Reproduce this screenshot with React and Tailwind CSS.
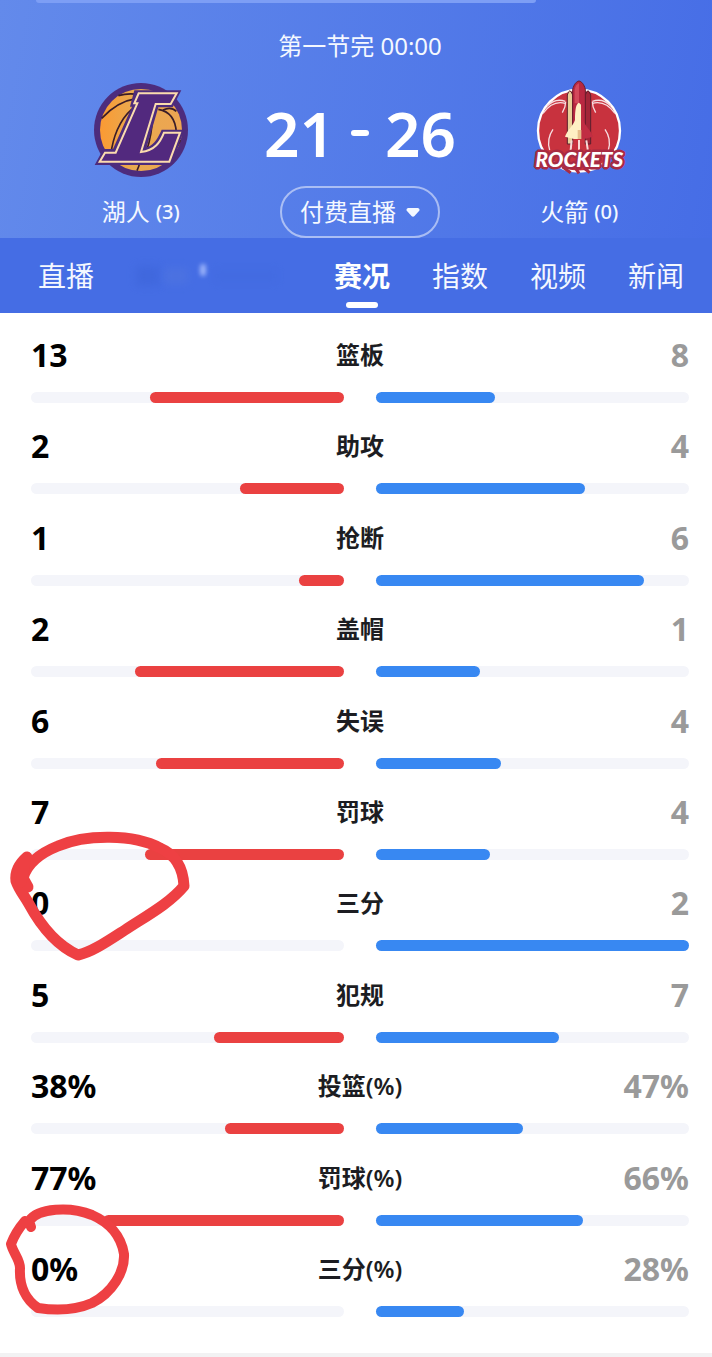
const tabs = ['赛况', '指数', '视频', '新闻'];

const stats = [
  { label: '篮板', home: 13, away: 8 },
  { label: '助攻', home: 2, away: 4 },
  { label: '抢断', home: 1, away: 6 },
  { label: '盖帽', home: 2, away: 1 },
  { label: '失误', home: 6, away: 4 },
  { label: '罚球', home: 7, away: 4 },
  { label: '三分', home: 0, away: 2, mark: 'wide' },
  { label: '犯规', home: 5, away: 7 },
  { label: '投篮(%)', home: 38, away: 47, percent: true },
  { label: '罚球(%)', home: 77, away: 66, percent: true },
  { label: '三分(%)', home: 0, away: 28, percent: true, mark: 'round' },
];

const LakersLogo = () => (
  <svg viewBox="30 30 300 300" className="w-[100px] h-[100px]" aria-hidden="true">
    <defs>
      <linearGradient id="ball" x1="0" x2="1">
        <stop offset="0" stopColor="#fb9a33" />
        <stop offset="0.4" stopColor="#e9a94f" />
        <stop offset="1" stopColor="#eda552" />
      </linearGradient>
    </defs>
    <circle cx="180" cy="180" r="141" fill="#4d2c7d" />
    <circle cx="180" cy="180" r="123" fill="url(#ball)" />
    <g fill="none" stroke="#3a1c28" strokeWidth="5">
      <path d="M62 145C90 115 125 92 165 86" />
      <path d="M112 77C135 70 155 70 175 74" />
      <path d="M90 252C95 205 115 150 152 118" />
      <path d="M217 120C214 175 207 215 196 244" />
      <path d="M232 118C268 124 284 150 286 188" />
      <path d="M246 120C262 112 276 114 286 124" />
      <path d="M168 302C174 290 176 280 177 272" />
      <path d="M268 262C280 245 292 228 298 210" />
    </g>
    <path
      d="M160 61H301L275 112H232L197 232C222 224 232 200 242 179H309L273 285H41L67 237H96L153 110H147Z"
      fill="#4d2c7d"
    />
    <path
      d="M173 70H287L269 102H224L180 246C222 242 238 216 249 188H297L265 275H56L72 248H104L169 100H160Z"
      fill="#52297e"
      stroke="#fbdcae"
      strokeWidth="6"
    />
  </svg>
);

const RocketsLogo = () => (
  <svg viewBox="30 30 300 300" className="w-[100px] h-[100px]" aria-hidden="true">
    <circle cx="180" cy="182" r="123" fill="#c8323e" stroke="#fff" strokeWidth="7" />
    <g fill="none" stroke="#f6dde0" strokeWidth="4">
      <path d="M139 100C112 92 88 108 72 130M139 94C112 84 96 96 84 108" />
      <path d="M220 100C248 92 272 108 288 130M220 94C248 84 264 96 276 108" />
      <path d="M102 178C88 198 86 220 92 240M258 178C272 198 274 220 268 240" />
      <path d="M140 95C140 108 136 118 130 128M220 95C220 108 224 118 230 128" />
    </g>
    <path d="M145 222V75Q152 50 161 75V222Z" fill="#e9cf98" stroke="#5b1f2d" strokeWidth="3" />
    <path d="M199 222V75Q207 50 215 75V222Z" fill="#a32538" stroke="#5b1f2d" strokeWidth="3" />
    <path d="M161 202V58C165 42 173 34 180 33C187 34 195 42 199 58V202Z" fill="#b92841" stroke="#6b1c2c" strokeWidth="3" />
    <path d="M167 60C169 48 174 42 180 40V100H167Z" fill="#d4495b" />
    <path d="M180 98C189 101 192 118 192 150C198 168 216 182 222 200L195 207H180Z" fill="#c02d43" />
    <path d="M180 98C171 101 168 118 168 150C162 168 144 182 138 200L165 207H186V104Z" fill="#fff0c4" />
    <path d="M176 180H187V207H176Z" fill="#e6bf8c" />
    <path d="M158 211L154 250M180 210V250M202 211L208 250" stroke="#f9d9d6" strokeWidth="6" />
    <path d="M130 290L155 308M170 295L180 310M195 294L212 308" stroke="#a92b43" strokeWidth="9" />
    <text
      x="181"
      y="292"
      textAnchor="middle"
      fill="#fff"
      stroke="#a92b43"
      strokeWidth="15"
      strokeLinejoin="bevel"
      paintOrder="stroke"
      className="font-['Lato'] font-black italic text-[62px]"
    >
      ROCKETS
    </text>
  </svg>
);

const Team = ({ logo, name, wins }) => (
  <div className="flex flex-col items-center pb-2.5">
    {logo}
    <div className="mt-4 flex items-center gap-1.5 text-2xl leading-8">
      <span>{name}</span>
      <span className="text-xl leading-8 font-medium">({wins})</span>
    </div>
  </div>
);

const Header = () => (
  <header className="relative bg-linear-100 from-[#638aeb] to-[#466de6] pl-[31px] pr-[23px] pt-[30px] text-[#f4f8ff]">
    <div className="absolute top-0 left-9 right-44 h-[3px] rounded-b-full bg-[#7d9ef5]" />
    <p className="text-center text-2xl leading-8">第一节完 00:00</p>
    <div className="mt-[18px] grid grid-cols-3">
      <Team logo={<LakersLogo />} name="湖人" wins={3} />
      <div className="flex flex-col items-center justify-between pt-4">
        <div className="flex items-center gap-4 text-[62px] leading-[74px] font-semibold text-white">
          <span>21</span>
          <span className="h-1.5 w-[18px] rounded-full bg-white" />
          <span>26</span>
        </div>
        <button className="flex h-[52px] items-center gap-2.5 rounded-full border-2 border-white/50 px-[18px] text-2xl">
          付费直播
          <svg viewBox="0 0 14 9" className="h-[9px] w-3.5" fill="currentColor" aria-hidden="true">
            <path d="M2 0H12Q14.500 1 13 3L8.500 8Q7 9.500 5.500 8L1 3Q-.5 1 2 0Z" />
          </svg>
        </button>
      </div>
      <Team logo={<RocketsLogo />} name="火箭" wins={0} />
    </div>
  </header>
);

const Tabs = () => (
  <nav className="flex h-[75px] items-center justify-between bg-[#456de4] pl-[38px] pr-7 text-[28px] leading-10 text-[#f4f8ff]">
    <button>直播</button>
    {/* faded-out tab */}
    <div className="flex h-10 w-[156px] items-center">
      <span className="h-5 w-6 bg-[#3d65da] opacity-60 blur-xs" />
      <span className="ml-1 h-4 w-6 bg-[#5277df] opacity-50 blur-xs" />
      <span className="mb-3 ml-3 h-3 w-1.5 rounded-full bg-[#b0c4ff] opacity-80 blur-[2px]" />
      <span className="ml-2 h-4 w-16 bg-[#3f68dd] opacity-30 blur-xs" />
    </div>
    {tabs.map((tab, i) => (
      <button key={tab} className={i === 0 ? 'relative font-bold text-white' : ''}>
        {tab}
        {i === 0 && (
          <span className="absolute -bottom-3 left-1/2 h-1.5 w-8 -translate-x-1/2 rounded-full bg-white" />
        )}
      </button>
    ))}
  </nav>
);

const Mark = ({ type }) =>
  type === 'wide' ? (
    <svg
      viewBox="0 820 210 150"
      className="pointer-events-none absolute -top-[67px] -left-[31px] h-[150px] w-[210px]"
      fill="none"
      stroke="#ee4043"
      strokeWidth="11"
      strokeLinecap="round"
      strokeLinejoin="round"
      aria-hidden="true"
    >
      <path d="M27 857C19 864 15 873 16 881C19 890 24 895 29 904C42 928 58 946 78 955C92 952 108 941 125 930C148 915 170 903 184 886C183 866 174 854 160 848C134 834 86 834 58 846C38 854 27 864 23 878L28 887" />
      <path d="M25 862L21 882" />
    </svg>
  ) : (
    <svg
      viewBox="0 1195 150 130"
      className="pointer-events-none absolute -top-[58px] -left-[31px] h-[130px] w-[150px]"
      fill="none"
      stroke="#ee4043"
      strokeWidth="10"
      strokeLinecap="round"
      strokeLinejoin="round"
      aria-hidden="true"
    >
      <path d="M25 1221C19 1228 14 1236 11 1244C13 1253 20 1259 20 1268C19 1286 26 1300 38 1308C58 1311 76 1310 92 1303C112 1293 125 1272 124 1254C121 1235 108 1222 92 1215C70 1206 38 1208 29 1221L31 1227" />
    </svg>
  );

const StatRow = ({ label, home, away, percent, mark }) => {
  const total = percent ? 100 : home + away;
  const unit = percent ? '%' : '';

  return (
    <li className="relative">
      <div className="grid grid-cols-3 items-center text-[32px] leading-8 font-bold">
        <span className="text-black">{home}{unit}</span>
        <span className="text-center text-2xl leading-8 font-semibold text-[#1c1d22]">{label}</span>
        <span className="text-right text-[#9a9a9a]">{away}{unit}</span>
      </div>
      <div className="mt-[21px] grid grid-cols-2 gap-8">
        <div className="flex h-[11px] justify-end rounded-full bg-[#f4f5fa]">
          <div className="rounded-full bg-[#ea4141]" style={{ width: `${(home / total) * 100}%` }} />
        </div>
        <div className="flex h-[11px] rounded-full bg-[#f4f5fa]">
          <div className="rounded-full bg-[#3888f2]" style={{ width: `${(away / total) * 100}%` }} />
        </div>
      </div>
      {mark && <Mark type={mark} />}
    </li>
  );
};

export default function App() {
  return (
    <div className="flex min-h-screen flex-col overflow-x-hidden bg-white font-['Noto_Sans','Noto_Sans_CJK_SC',sans-serif]">
      <Header />
      <Tabs />
      <ul className="flex flex-1 flex-col justify-between pt-[26px] pr-[23px] pb-9 pl-[31px]">
        {stats.map((stat) => (
          <StatRow key={stat.label} {...stat} />
        ))}
      </ul>
      <div className="h-1 bg-[#f2f2f3]" />
    </div>
  );
}
